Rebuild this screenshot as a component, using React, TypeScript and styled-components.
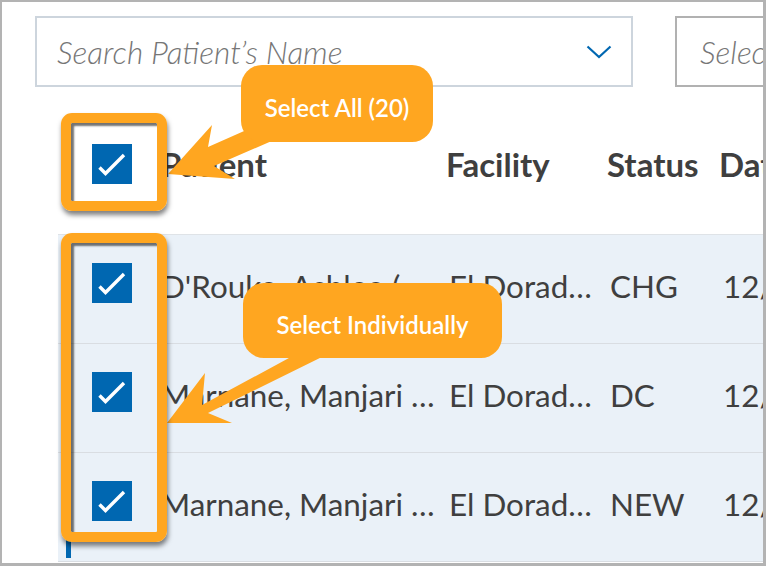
import React from 'react'
import styled, { createGlobalStyle } from 'styled-components'

const GlobalStyle = createGlobalStyle`
  html, body {
    margin: 0;
    padding: 0;
    background: #ffffff;
  }
  body {
    font-family: 'Lato', 'Noto Sans', sans-serif;
  }
`

const BLUE = '#0067b1'
const ORANGE = '#ffa620'
const TEXT = '#3f3f3f'

const Frame = styled.div`
  position: relative;
  width: 766px;
  height: 566px;
  box-sizing: border-box;
  border-style: solid;
  border-color: #b3b3b3;
  border-width: 2px 3px 3px 2px;
  background: #ffffff;
  overflow: hidden;
`

const Toolbar = styled.div`
  display: flex;
  gap: 42px;
  padding: 14px 0 0 33px;
`

const SearchSelect = styled.div`
  flex-shrink: 0;
  width: 598px;
  height: 71px;
  box-sizing: border-box;
  border: 2px solid #cdd5dd;
  display: flex;
  align-items: center;
  justify-content: space-between;
  padding: 0 19px 0 20px;
`

const Placeholder = styled.span`
  font-family: 'Lato', sans-serif;
  font-style: italic;
  font-weight: 300;
  font-size: 31.5px;
  color: #767676;
  white-space: nowrap;
`

const PlainSelect = styled.div`
  flex-shrink: 0;
  width: 220px;
  height: 71px;
  box-sizing: border-box;
  border: 2px solid #b1b1b1;
  display: flex;
  align-items: center;
  padding-left: 23px;
`

const Table = styled.div`
  margin-left: 56px;
`

const COLUMNS = '103px 285px 161px 112px 1fr'

const HeaderRow = styled.div`
  display: grid;
  grid-template-columns: ${COLUMNS};
  align-items: start;
  height: 148px;
  box-sizing: border-box;
  padding-top: 57px;
  border-bottom: 1px solid #dfe3e7;
`

const HeaderCell = styled.div<{ $check?: boolean }>`
  height: 40px;
  display: flex;
  align-items: center;
  padding-left: ${(p) => (p.$check ? '34px' : '0')};
  font-family: 'Lato', sans-serif;
  font-weight: 700;
  font-size: 33px;
  color: ${TEXT};
  white-space: nowrap;
  overflow: hidden;
`

const Row = styled.div`
  display: grid;
  grid-template-columns: ${COLUMNS};
  align-items: stretch;
  height: 109px;
  box-sizing: border-box;
  background: #eaf1f8;
  border-bottom: 1px solid #d9dde2;
`

const CheckCell = styled.div`
  margin: 0 0 3px 8px;
  border-left: 5px solid ${BLUE};
  padding: 28px 0 0 21px;
`

const Cell = styled.div<{ $indent?: number; $clip?: boolean }>`
  padding: 31px 10px 0 ${(p) => p.$indent ?? 3}px;
  font-family: 'Lato', sans-serif;
  font-size: 31.4px;
  line-height: 40px;
  color: ${TEXT};
  white-space: nowrap;
  overflow: ${(p) => (p.$clip ? 'visible' : 'hidden')};
  text-overflow: ${(p) => (p.$clip ? 'clip' : 'ellipsis')};
`

const Box = styled.div`
  width: 40px;
  height: 40px;
  background: ${BLUE};
  display: flex;
  align-items: center;
  justify-content: center;
`

const Highlight = styled.div<{ $top: number; $height: number }>`
  position: absolute;
  left: 59px;
  top: ${(p) => p.$top}px;
  width: 106px;
  height: ${(p) => p.$height}px;
  box-sizing: border-box;
  border: 10px solid ${ORANGE};
  border-radius: 11px;
  box-shadow: inset 3px 3px 2px rgba(0, 0, 0, 0.55), 1px 4px 5px rgba(0, 0, 0, 0.5);
  pointer-events: none;
`

const Callout = styled.div<{ $left: number; $top: number; $w: number; $h: number }>`
  position: absolute;
  left: ${(p) => p.$left}px;
  top: ${(p) => p.$top}px;
  width: ${(p) => p.$w}px;
  height: ${(p) => p.$h}px;
  box-sizing: border-box;
  padding-top: 7px;
  border-radius: 21px;
  background: ${ORANGE};
  color: #ffffff;
  display: flex;
  align-items: center;
  justify-content: center;
  font-family: 'Lato', sans-serif;
  font-weight: 600;
  font-size: 24px;
  white-space: nowrap;
`

const Arrows = styled.svg`
  position: absolute;
  left: -2px;
  top: -2px;
  width: 766px;
  height: 566px;
  pointer-events: none;
`

const Check = () => (
  <Box>
    <svg width='40' height='40' viewBox='0 0 40 40'>
      <path d='M7.5 23.5 L13.5 29.5 L32 11' fill='none' stroke='#fff' strokeWidth='3.4' />
    </svg>
  </Box>
)

const Chevron = () => (
  <svg width='26' height='14' viewBox='0 0 26 14'>
    <path d='M1.5 1.5 L13 12 L24.5 1.5' fill='none' stroke={BLUE} strokeWidth='2.2' />
  </svg>
)

const patients = [
  { name: "D'Rouke, Ashlee (72)", facility: 'El Dorado Hills', status: 'CHG', date: '12/14/2023' },
  { name: 'Marnane, Manjari (45)', facility: 'El Dorado Hills', status: 'DC', date: '12/14/2023' },
  { name: 'Marnane, Manjari (45)', facility: 'El Dorado Hills', status: 'NEW', date: '12/15/2023' }
]

const App = () => (
  <>
    <GlobalStyle />
    <Frame>
      <Toolbar>
        <SearchSelect>
          <Placeholder>Search Patient’s Name</Placeholder>
          <Chevron />
        </SearchSelect>
        <PlainSelect>
          <Placeholder>Select Facility</Placeholder>
        </PlainSelect>
      </Toolbar>
      <Table>
        <HeaderRow>
          <HeaderCell $check>
            <Check />
          </HeaderCell>
          <HeaderCell>Patient</HeaderCell>
          <HeaderCell>Facility</HeaderCell>
          <HeaderCell>Status</HeaderCell>
          <HeaderCell>Date</HeaderCell>
        </HeaderRow>
        {patients.map((p, i) => (
          <Row key={i}>
            <CheckCell>
              <Check />
            </CheckCell>
            <Cell $indent={0}>{p.name}</Cell>
            <Cell>{p.facility}</Cell>
            <Cell>{p.status}</Cell>
            <Cell $indent={4} $clip>
              {p.date}
            </Cell>
          </Row>
        ))}
      </Table>

      <Arrows viewBox='0 0 766 566'>
        <polygon
          fill={ORANGE}
          points='168,174 212,125 208,147 262,123 290,133 214,166 235,179'
        />
        <polygon
          fill={ORANGE}
          points='167,423 205,373 202,405 300,352 330,353 208,413 232,423'
        />
      </Arrows>
      <Highlight $top={111} $height={98} />
      <Highlight $top={231} $height={309} />
      <Callout $left={239} $top={63} $w={192} $h={77}>
        Select All (20)
      </Callout>
      <Callout $left={241} $top={281} $w={259} $h={75}>
        Select Individually
      </Callout>
    </Frame>
  </>
)

export default App
